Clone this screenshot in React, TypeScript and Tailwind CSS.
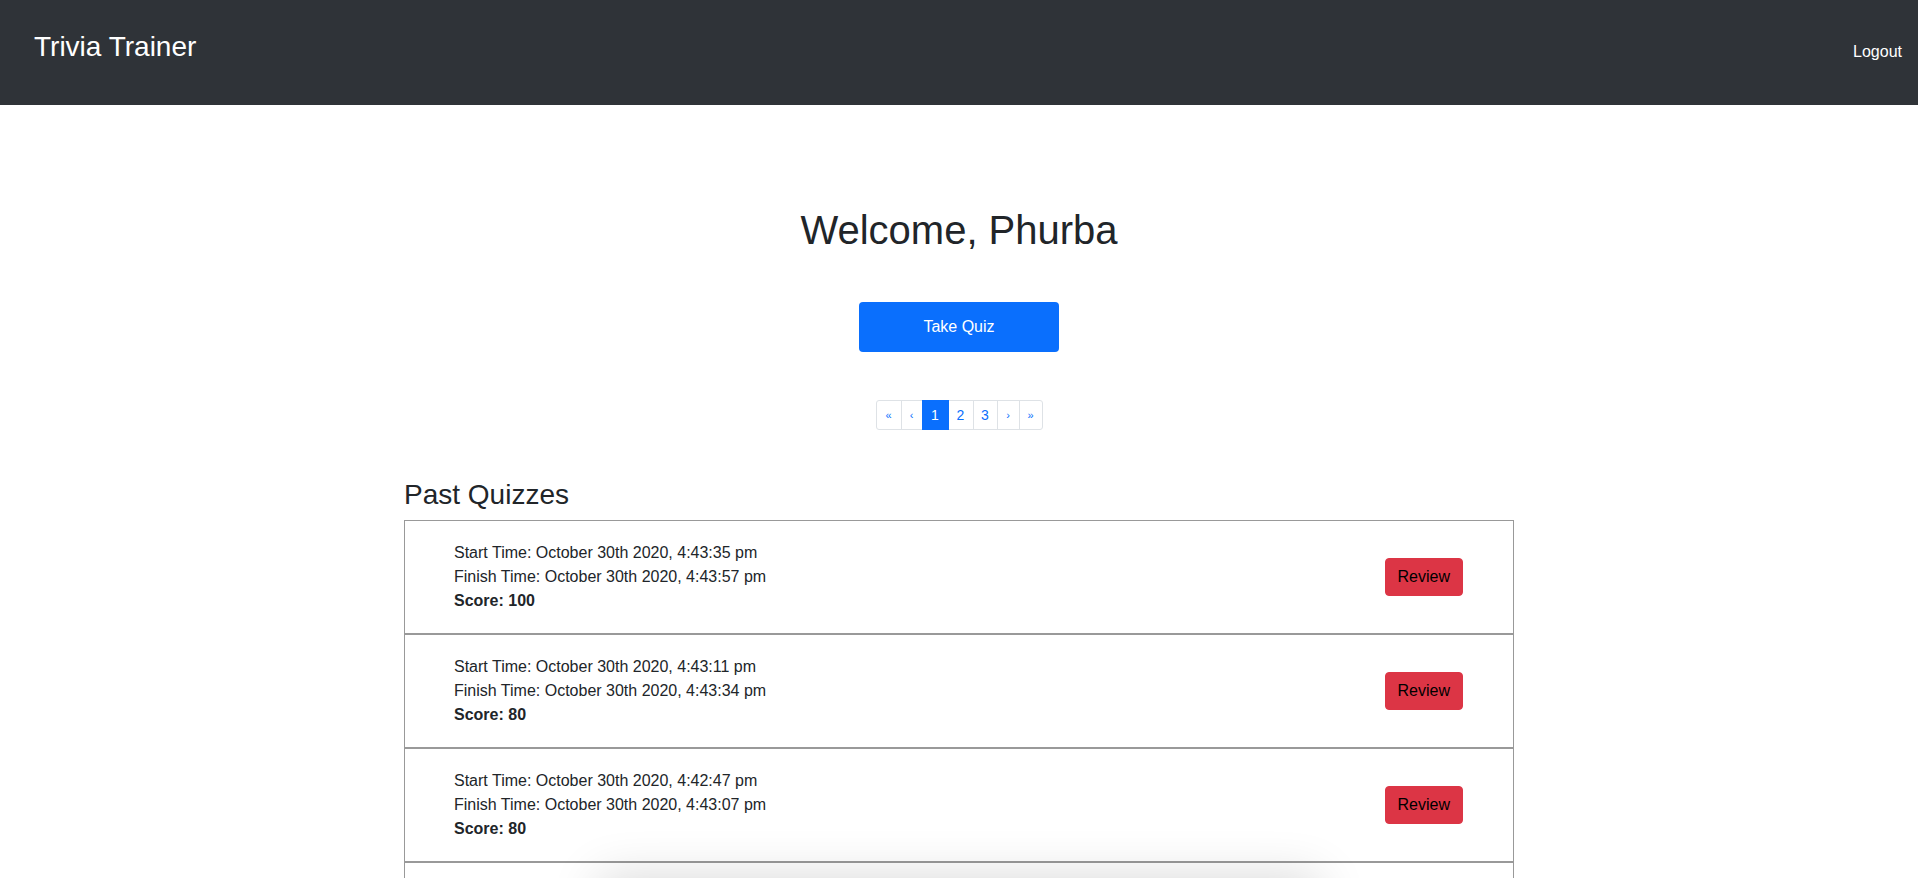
import React from 'react';

const quizzes = [
  { start: 'October 30th 2020, 4:43:35 pm', finish: 'October 30th 2020, 4:43:57 pm', score: 100 },
  { start: 'October 30th 2020, 4:43:11 pm', finish: 'October 30th 2020, 4:43:34 pm', score: 80 },
  { start: 'October 30th 2020, 4:42:47 pm', finish: 'October 30th 2020, 4:43:07 pm', score: 80 },
  { start: 'October 30th 2020, 4:42:15 pm', finish: 'October 30th 2020, 4:42:39 pm', score: 60 },
];

const pages = [
  { label: '«', w: 'w-[26px]', small: true },
  { label: '‹', w: 'w-[22px]', small: true },
  { label: '1', w: 'w-[27px]', active: true },
  { label: '2', w: 'w-[26px]' },
  { label: '3', w: 'w-[25px]' },
  { label: '›', w: 'w-[23px]', small: true },
  { label: '»', w: 'w-[24px]', small: true },
];

export default function App() {
  return (
    <div className="h-screen overflow-hidden bg-white font-['Liberation_Sans',Arial,sans-serif] text-[#212529]">
      {/* Navbar */}
      <nav className="flex h-[105px] items-start justify-between bg-[#2f3338] pl-[34px] pr-[16px]">
        <a className="pt-[26px] text-[28px] leading-[42px] text-white">Trivia Trainer</a>
        <a className="pt-[40px] text-[16px] leading-[24px] text-white">Logout</a>
      </nav>

      <main className="mx-auto w-[1110px]">
        <h1 className="mt-[101px] text-center text-[40px] leading-[48px] font-normal">Welcome, Phurba</h1>

        <button className="mx-auto mt-12 block h-[50px] w-[200px] rounded-[4px] bg-[#0a6ffd] text-[16px] text-white">
          Take Quiz
        </button>

        {/* Pagination */}
        <div className="mt-12 flex justify-center">
          <ul className="flex">
            {pages.map((p, i) => (
              <li
                key={i}
                className={`-ml-px flex h-[30px] items-center justify-center border first:ml-0 first:rounded-l-[3px] last:rounded-r-[3px] ${p.w} ${
                  p.active
                    ? 'relative z-10 border-[#0a6ffd] bg-[#0a6ffd] text-white'
                    : 'border-[#dee2e6] text-[#0a6ffd]'
                } ${p.small ? 'text-[11px]' : 'text-[14px]'}`}
              >
                {p.label}
              </li>
            ))}
          </ul>
        </div>

        <h3 className="mt-12 mb-2 text-[28px] leading-[34px] font-normal">Past Quizzes</h3>

        <div>
          {quizzes.map((q, i) => (
            <div
              key={i}
              className="flex items-center justify-between border border-[#999] py-5 pl-[49px] pr-[50px] text-[16px] leading-[24px]"
            >
              <div>
                <div>Start Time: {q.start}</div>
                <div>Finish Time: {q.finish}</div>
                <div className="font-bold">Score: {q.score}</div>
              </div>
              <button className="h-[38px] rounded-[4px] border border-[#dc3545] bg-[#dc3545] px-3 text-[16px] text-black">
                Review
              </button>
            </div>
          ))}
        </div>
      </main>

      {/* soft shadow from an element just below the fold */}
      <div className="fixed top-full left-1/2 h-[60px] w-[720px] -translate-x-1/2 bg-white shadow-[0_0_50px_rgba(0,0,0,0.16)]" />
    </div>
  );
}
